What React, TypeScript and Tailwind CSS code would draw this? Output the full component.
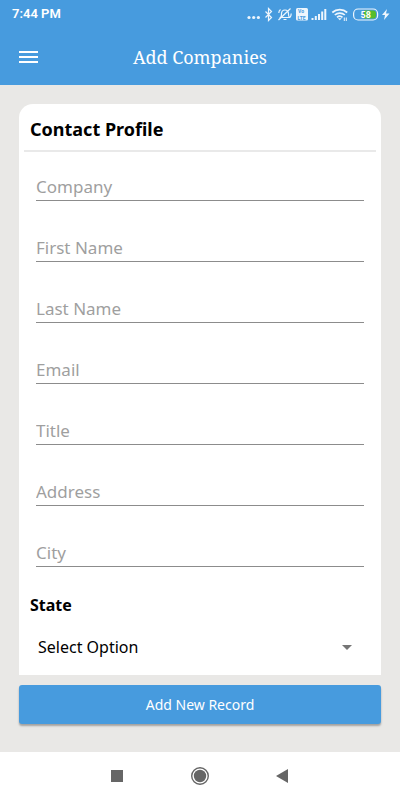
import React from 'react';

const fields = ['Company', 'First Name', 'Last Name', 'Email', 'Title', 'Address', 'City'];

const StatusIcons = () => (
  <svg width="144" height="16" viewBox="246 6 144 16" fill="none" stroke="#eef6fd" strokeWidth="1.2" aria-hidden="true">
    <g fill="#eef6fd" stroke="none">
      <circle cx="249" cy="17.5" r="1.6" />
      <circle cx="253.7" cy="17.5" r="1.6" />
      <circle cx="258.4" cy="17.5" r="1.6" />
    </g>
    {/* bluetooth */}
    <path d="M265.5 11.5l6 6-3 3V8.5l3 3-6 6" />
    {/* muted bell */}
    <path d="M280.5 17.5c1-1 1-2 1-3.5 0-2.5 1.3-4 3.5-4s3.5 1.5 3.5 4c0 1.5 0 2.5 1 3.5zM283.5 19.5h3M290.5 8.5l-12 11.5M278.8 13c0-1.5.7-2.8 1.7-3.5M291.2 13.5c0 1.5-.3 2.5-1 3.5" />
    {/* VoLTE */}
    <rect x="296" y="8" width="12" height="12.5" rx="1.5" fill="#eef6fd" stroke="none" />
    <g fill="#479bde" stroke="none" fontFamily="Roboto, sans-serif" fontWeight="700" fontSize="5">
      <text x="298" y="13">Vo</text>
      <text x="297.5" y="19.5">LTE</text>
    </g>
    {/* signal */}
    <path strokeWidth="2" d="M312.5 20v-2M315.8 20v-4M319 20v-6M322.2 20v-8.5M325.3 20V9" />
    {/* wifi */}
    <path strokeWidth="1.7" d="M332.3 12.5c4.2-3.8 10.7-3.8 14.9 0M334.8 15c2.8-2.6 7.2-2.6 10 0M337 17.3c1.6-1.4 4-1.4 5.5 0" />
    <path fill="#eef6fd" stroke="none" d="M337.8 18.3h4l-2 2z" />
    <path strokeWidth="1" d="M344.3 21v-3.5M346.3 17.5V21" />
    {/* battery */}
    <rect x="353.6" y="9" width="24" height="11" rx="4.5" />
    <path fill="#57bd2c" stroke="none" d="M364 10.5h9a3 3 0 0 1 3 3v2a3 3 0 0 1-3 3h-9z" />
    <text x="360.5" y="17.7" fill="#fff" stroke="none" fontFamily="Roboto, sans-serif" fontWeight="700" fontSize="9">58</text>
    <path fill="#eef6fd" stroke="none" d="M387 9l-5 6h3l-1 5 5.5-6.5h-3.5z" />
  </svg>
);

const App = () => {
  return (
    <div className="flex min-h-screen flex-col bg-[#e9e8e6] font-['Noto_Sans',sans-serif]">
      <header className="bg-[#479bde] text-white">
        <div className="flex h-7 items-center justify-between pl-3 pr-2.5 font-['Roboto',sans-serif] text-[13px] font-semibold">
          <span>7:44 PM</span>
          <StatusIcons />
        </div>
        <div className="grid h-[57px] grid-cols-[24px_1fr_24px] items-center px-4">
          <button type="button" aria-label="Open menu">
            <svg width="24" height="14" viewBox="0 0 24 14" fill="white">
              <path d="M3 1h19v2H3zM3 6h19v2H3zM3 11h19v2H3z" />
            </svg>
          </button>
          <h1 className="text-center font-['Noto_Serif',serif] text-lg">Add Companies</h1>
        </div>
      </header>

      <main className="flex-1 px-[19px] pt-[19px]">
        <form>
          <div className="rounded-t-[14px] bg-white px-[5px] pb-3">
            <h2 className="flex h-12 items-center border-b-2 border-[#e9e9e9] px-1.5 pt-1 text-lg font-bold text-black">
              Contact Profile
            </h2>
            <div className="flex flex-col gap-[34px] px-3 pt-[22px]">
              {fields.map((name) => (
                <input
                  key={name}
                  type="text"
                  aria-label={name}
                  placeholder={name}
                  className="h-[27px] w-full border-b border-[#8c8c8c] bg-transparent pb-0.5 text-[17px] leading-6 outline-none placeholder:text-[#9f9f9f]"
                />
              ))}
            </div>
            <label htmlFor="state" className="mt-6 block px-1.5 text-base leading-7 font-bold text-black">
              State
            </label>
            <div className="mt-3 grid items-center px-3.5">
              <select
                id="state"
                className="col-start-1 row-start-1 h-8 w-full appearance-none bg-transparent text-base text-black outline-none"
              >
                <option>Select Option</option>
              </select>
              <svg className="pointer-events-none col-start-1 row-start-1 mr-2.5 justify-self-end" width="10" height="5" viewBox="0 0 10 5" fill="#757575">
                <path d="M0 0h10L5 5z" />
              </svg>
            </div>
          </div>
          <button
            type="submit"
            className="mt-2.5 h-[39px] w-full rounded-[3px] bg-[#479bde] text-sm text-white shadow-[0_2px_2px_rgba(0,0,0,0.3)]"
          >
            Add New Record
          </button>
        </form>
      </main>

      <nav className="flex h-12 items-center justify-center gap-[63px] bg-white">
        <button type="button" aria-label="Recent apps">
          <svg width="20" height="20" viewBox="0 0 20 20" fill="#666">
            <path d="M4 4h12v12H4z" />
          </svg>
        </button>
        <button type="button" aria-label="Home">
          <svg width="20" height="20" viewBox="0 0 20 20" fill="#666">
            <circle cx="10" cy="10" r="8.3" fill="none" stroke="#666" strokeWidth="1.4" />
            <circle cx="10" cy="10" r="6.2" />
          </svg>
        </button>
        <button type="button" aria-label="Back">
          <svg width="20" height="20" viewBox="0 0 20 20" fill="#666">
            <path d="M3 10l12-7v14z" />
          </svg>
        </button>
      </nav>
    </div>
  );
};

export default App;
